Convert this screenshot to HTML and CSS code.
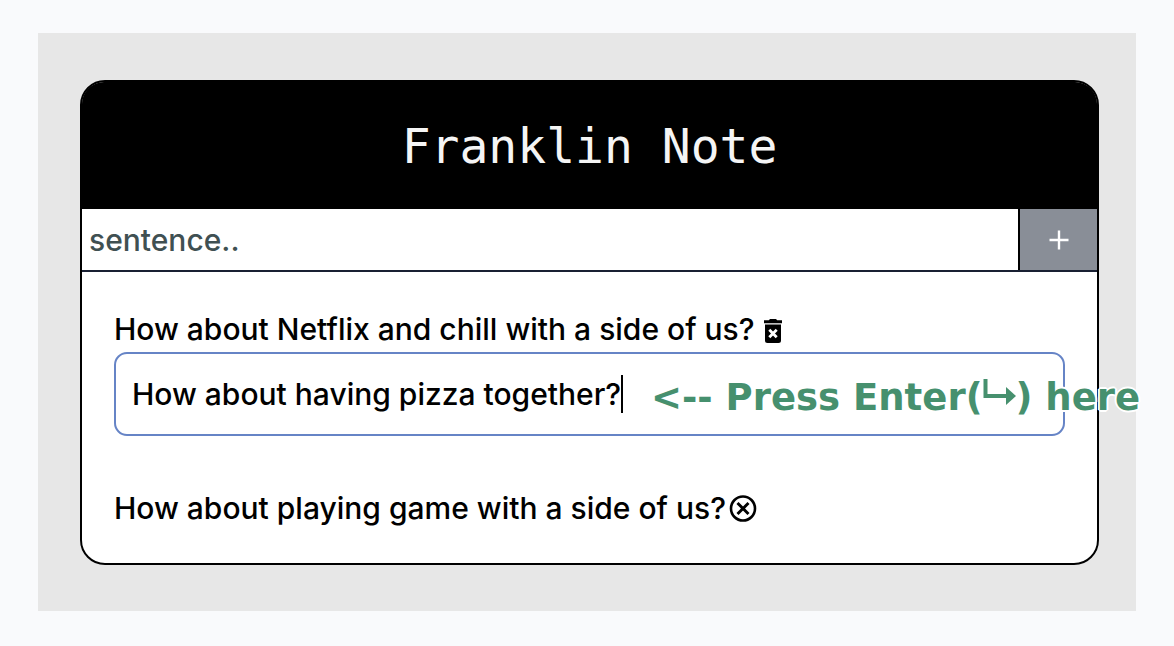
FILE: index.html
```html
<!DOCTYPE html>
<html lang="en">
<head>
<meta charset="utf-8">
<meta name="viewport" content="width=device-width, initial-scale=1">
<title>Franklin Note</title>
<link rel="stylesheet" href="styles.css">
</head>
<body>
<main class="stage">
  <section class="card">
    <h1 class="title">Franklin Note</h1>
    <form class="entry">
      <input class="entry-input" type="text" placeholder="sentence.." aria-label="Sentence">
      <button class="entry-add" type="button" aria-label="Add sentence">
        <svg width="20" height="20" viewBox="0 0 20 20" fill="none" stroke="currentColor" stroke-width="2.400"><path d="M10 0.500v19M0.500 10h19"/></svg>
      </button>
    </form>
    <ul class="notes">
      <li class="note">
        <span>How about Netflix and chill with a side of us?</span>
        <button class="icon-button trash" type="button" aria-label="Delete sentence">
          <svg width="20" height="24" viewBox="0 0 20 24"><path fill="currentColor" fill-rule="evenodd" d="M1 1.3h4.8L7 0h6l1.2 1.3H19v2.9H1zM2 5.5h16v16a2.5 2.5 0 0 1-2.5 2.5h-11A2.500 2.500 0 0 1 2 21.500z"/><path d="M6.300 10.800l7.400 7.400M13.700 10.800l-7.400 7.400" stroke="#fff" stroke-width="2.800"/></svg>
        </button>
      </li>
      <li class="editor">
        <input class="editor-input" type="text" value="How about having pizza together?" aria-label="Edit sentence">
        <span class="caret"></span>
        <span class="hint">&lt;-- Press Enter(<svg width="33" height="32" viewBox="0 0 33 32"><path d="M2.500 1v17h22" fill="none" stroke="currentColor" stroke-width="4"/><path d="M23 9l10 9-10 9z" fill="currentColor"/></svg>) here</span>
      </li>
      <li class="note">
        <span>How about playing game with a side of us?</span>
        <button class="icon-button" type="button" aria-label="Remove sentence">
          <svg width="28" height="28" viewBox="0 0 28 28" fill="none" stroke="currentColor"><circle cx="14" cy="14.500" r="12" stroke-width="2.600"/><path d="M8.500 9l11 11M19.500 9l-11 11" stroke-width="2.900"/></svg>
        </button>
      </li>
    </ul>
  </section>
</main>
</body>
</html>
```
FILE: styles.css
```css
* { box-sizing: border-box; }

body {
  margin: 0;
  padding: 33px 38px 35px;
  background: #f9fafc;
  color: #000;
  font-family: Inter, "Liberation Sans", sans-serif;
  font-size: 30px;
  font-weight: 450;
  line-height: 40px;
}

input, button { font: inherit; color: inherit; }

.stage {
  padding: 47px 37px 46px 42px;
  background: #e7e7e7;
}

.card {
  border: 2px solid #000;
  border-radius: 25px;
  background: #fff;
}

.title {
  margin: 0;
  padding: 32px 0 31px;
  border-radius: 22px 22px 0 0;
  background: #000;
  color: #f5f5f5;
  font-family: "DejaVu Sans Mono", monospace;
  font-size: 48px;
  font-weight: 400;
  line-height: 64px;
  text-align: center;
}

.entry {
  display: flex;
  height: 63px;
  border-bottom: 2px solid #192033;
}

.entry-input {
  flex: 1;
  min-width: 0;
  padding: 0 7px;
  border: 0;
  background: #fff;
}

.entry-input::placeholder { color: #405052; opacity: 1; }

.entry-add {
  display: flex;
  align-items: center;
  justify-content: center;
  width: 79px;
  padding: 0;
  border: 0;
  border-left: 2px solid #000;
  background: #898e97;
  color: #fff;
}

.notes {
  margin: 0;
  padding: 37px 32px 35px;
  list-style: none;
}

.note {
  display: flex;
  align-items: center;
  gap: 3px;
}

.icon-button {
  display: flex;
  padding: 0;
  border: 0;
  background: none;
}

.trash { padding: 3px 5px 0; }

.editor {
  position: relative;
  display: flex;
  align-items: center;
  height: 84px;
  margin: 3px 0 52px;
  padding: 0 16px;
  border: 2px solid #6684c6;
  border-radius: 13px;
}

.editor-input {
  field-sizing: content;
  min-width: 0;
  padding: 0;
  border: 0;
  outline: 0;
  background: none;
}

.caret {
  width: 2px;
  height: 38px;
  background: #000;
}

.hint {
  position: absolute;
  top: 24px;
  left: 535px;
  color: #46906e;
  font-family: "DejaVu Sans", sans-serif;
  font-size: 37px;
  font-weight: 700;
  white-space: nowrap;
  text-shadow: 2px 0 #fff, -2px 0 #fff, 0 2px #fff, 0 -2px #fff, 1px 1px #fff, -1px -1px #fff, 1px -1px #fff, -1px 1px #fff;
}
```
